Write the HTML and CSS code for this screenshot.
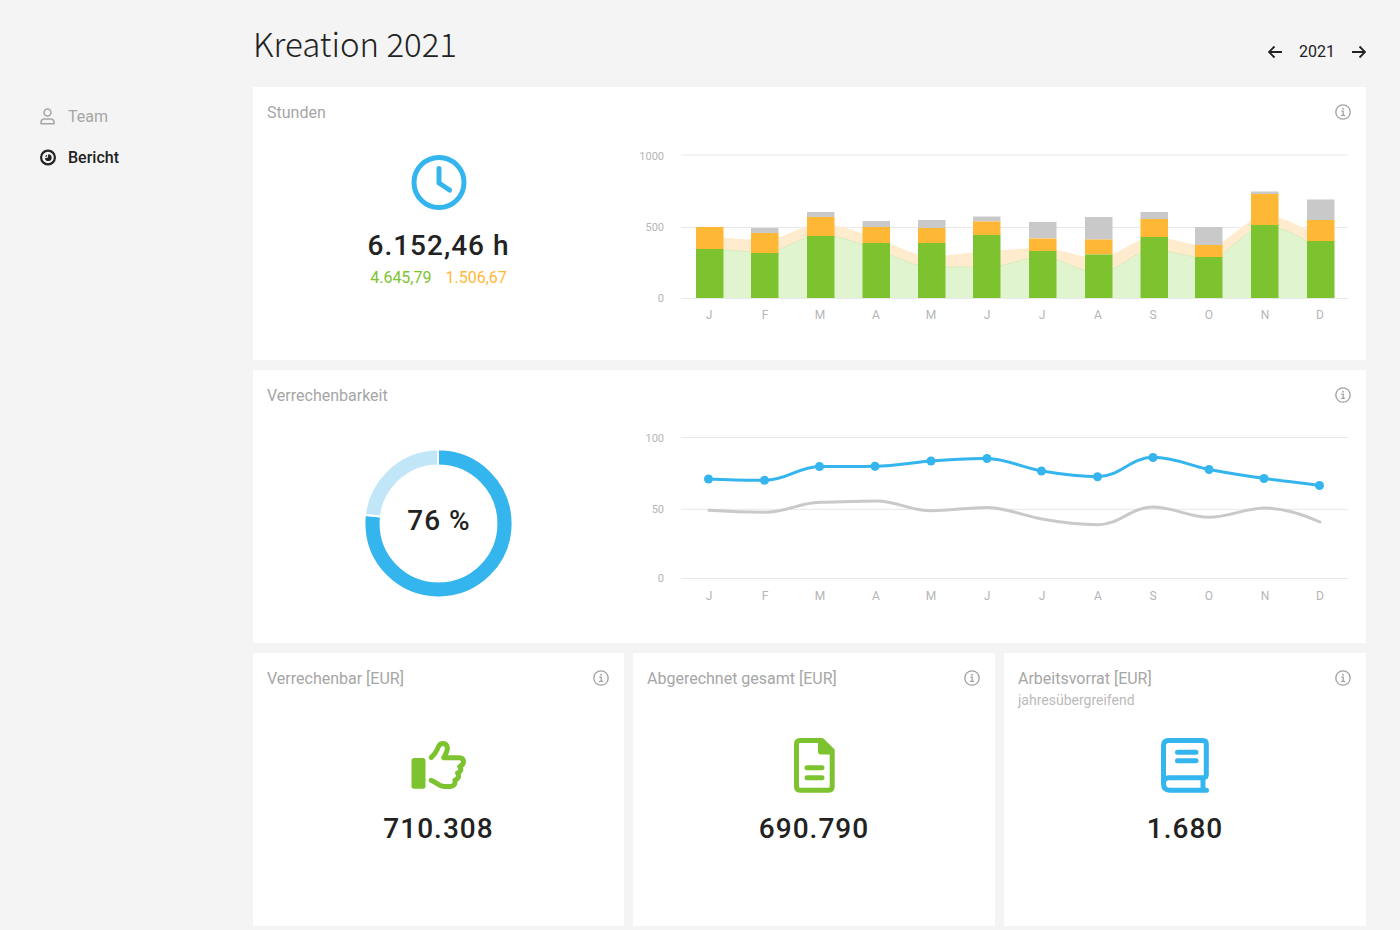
FILE: index.html
```html
<!DOCTYPE html>
<html lang="de">
<head>
<meta charset="utf-8">
<meta name="viewport" content="width=device-width, initial-scale=1">
<title>Kreation 2021</title>
<link rel="stylesheet" href="styles.css">
</head>
<body>
<svg class="defs" aria-hidden="true">
  <symbol id="info" viewBox="0 0 16 16">
    <circle cx="8" cy="8" r="7.2" fill="none" stroke="currentColor" stroke-width="1.3"/>
    <path d="M6.3 7.2H8.2V11.2M6.1 11.4H10" fill="none" stroke="currentColor" stroke-width="1.2"/>
    <circle cx="8" cy="4.7" r="0.9" fill="currentColor"/>
  </symbol>
</svg>
<div class="layout">
  <nav class="sidebar" aria-label="Bereiche">
    <a class="nav-link" href="#team">
      <svg class="nav-icon" viewBox="0 0 16 18" fill="none" stroke="currentColor" stroke-width="1.5"><circle cx="7.500" cy="4.500" r="3.500"/><path d="M4 11H11C13.500 11.300 14.200 13.500 14 15.700H1C0.800 13.500 1.500 11.300 4 11Z" stroke-linejoin="round"/></svg>
      Team
    </a>
    <a class="nav-link nav-link-active" href="#bericht" aria-current="page">
      <svg class="nav-icon" viewBox="0 0 16 18"><circle cx="8" cy="8.500" r="6.900" fill="none" stroke="currentColor" stroke-width="2.200"/><path d="M8.200 5.300A3.400 3.400 0 1 1 4.900 9.300L8 8.600Z" fill="currentColor"/><path d="M5 7.800A3.400 3.400 0 0 1 7 5.700L7.200 7.400Z" fill="currentColor"/></svg>
      Bericht
    </a>
  </nav>
  <main class="main">
    <header class="topbar">
      <h1 class="page-title">Kreation 2021</h1>
      <div class="year-picker">
        <button class="arrow" type="button" aria-label="Vorheriges Jahr"><svg viewBox="0 0 14 14"><path d="M14 7H1M6.5 1.5L1 7L6.5 12.5"/></svg></button>
        <span>2021</span>
        <button class="arrow" type="button" aria-label="Nächstes Jahr"><svg viewBox="0 0 14 14"><path d="M0 7H13M7.5 1.5L13 7L7.5 12.5"/></svg></button>
      </div>
    </header>

    <div class="cards">
      <section class="card card-wide">
        <header class="card-head">
          <h2 class="card-title">Stunden</h2>
          <button class="info" type="button" aria-label="Info zu Stunden"><svg><use href="#info"/></svg></button>
        </header>
        <div class="split">
          <div class="metric">
            <svg class="icon blue" viewBox="0 0 56 56"><circle cx="28" cy="27.5" r="25"/><path d="M28 13.5V28L38.5 35"/></svg>
            <strong class="value">6.152,46 h</strong>
            <div class="parts"><span class="part-green">4.645,79</span><span class="part-orange">1.506,67</span></div>
          </div>
          <svg class="chart" viewBox="0 0 719 190" role="img" aria-label="Stunden pro Monat">
            <path class="grid-line" d="M48 15H715M48 87.5H715M48 158.5H715"/>
            <path class="area-orange" d="M76 96C94 98 114 100 132 100S169 84 187 84S225 92 243 98S280 116 298 116S335 112 354 111S391 108 409 108S447 118 465 118S502 97 520 97S557 106 576 106S613 76 632 76S669 88 687 96V158H76Z"/>
            <path class="area-green" d="M76 109C94 110 114 112 132 112S169 95 187 95S225 103 243 109S280 127 298 127S335 127 354 127S391 117 409 117S447 133 465 133S502 110 520 110S557 118 576 118S613 86 632 86S669 99 687 108V158H76Z"/>
            <path class="area-edge" d="M76 109C94 110 114 112 132 112S169 95 187 95S225 103 243 109S280 127 298 127S335 127 354 127S391 117 409 117S447 133 465 133S502 110 520 110S557 118 576 118S613 86 632 86S669 99 687 108"/>
            <path class="bar-gray" d="M118 88H145.500V93H118ZM174 72H201.500V77H174ZM229.500 81H257V87H229.500ZM285 80H312.500V88H285ZM340 76.500H367.500V81.500H340ZM396 82H423.500V98.500H396ZM452 77H479.500V99.500H452ZM507.500 72H535V79H507.500ZM562 87H589.500V105H562ZM618 51.500H645.500V54H618ZM674 59.500H701.500V80H674Z"/>
            <path class="bar-orange" d="M63 87H90.500V109H63ZM118 93H145.500V113H118ZM174 77H201.500V96H174ZM229.500 87H257V103H229.500ZM285 88H312.500V103H285ZM340 81.500H367.500V95H340ZM396 98.500H423.500V111H396ZM452 99.500H479.500V114.500H452ZM507.500 79H535V97H507.500ZM562 105H589.500V117H562ZM618 54H645.500V85H618ZM674 80H701.500V101H674Z"/>
            <path class="bar-green" d="M63 109H90.500V158H63ZM118 113H145.500V158H118ZM174 96H201.500V158H174ZM229.500 103H257V158H229.500ZM285 103H312.500V158H285ZM340 95H367.500V158H340ZM396 111H423.500V158H396ZM452 114.500H479.500V158H452ZM507.500 97H535V158H507.500ZM562 117H589.500V158H562ZM618 85H645.500V158H618ZM674 101H701.500V158H674Z"/>
            <g class="ticks"><text x="31" y="20">1000</text><text x="31" y="91">500</text><text x="31" y="162">0</text></g>
            <g class="months"><text x="76" y="179">J</text><text x="132" y="179">F</text><text x="187" y="179">M</text><text x="243" y="179">A</text><text x="298" y="179">M</text><text x="354" y="179">J</text><text x="409" y="179">J</text><text x="465" y="179">A</text><text x="520" y="179">S</text><text x="576" y="179">O</text><text x="632" y="179">N</text><text x="687" y="179">D</text></g>
          </svg>
        </div>
      </section>

      <section class="card card-wide">
        <header class="card-head">
          <h2 class="card-title">Verrechenbarkeit</h2>
          <button class="info" type="button" aria-label="Info zu Verrechenbarkeit"><svg><use href="#info"/></svg></button>
        </header>
        <div class="split">
          <div class="metric metric-donut">
            <svg class="donut" viewBox="0 0 148 148" role="img" aria-label="76 %">
              <circle class="donut-rest" cx="73.5" cy="73.5" r="66"/>
              <circle class="donut-value" cx="73.5" cy="73.5" r="66" pathLength="360" stroke-dasharray="276 84" transform="rotate(-90 73.5 73.5)"/>
              <path class="donut-gap" d="M73 0V16M0 65L16 66.500"/>
              <text class="donut-text" x="74" y="80">76 %</text>
            </svg>
          </div>
          <svg class="chart" viewBox="0 1 719 189" role="img" aria-label="Verrechenbarkeit pro Monat">
            <path class="grid-line" d="M48 15.500H715M48 87.300H715M48 156.500H715"/>
            <path class="line-gray" d="M76 88.300C94 89.500 114 90.300 132 90.300C154 90.300 165 80.800 187 80.300S225 79 243 79C265 79 276 88.700 298 88.700C317 88.700 335 85.500 354 85.500C373 85.500 391 94 409 97C428 100.500 447 102.700 465 102.700C487 102.700 498 85 520 85C540 85 556 95.300 576 95.300C596 95.300 612 86 632 86C650 86 669 92 687 100"/>
            <path class="line-blue" d="M76 57C94 57.500 114 58.300 132 58.300C154 58.300 165 44.700 187 44.500S225 44.500 243 44.300S280 40.500 298 39S335 36.300 354 36.500S391 46 409 49S447 54.700 465 54.700C487 54.700 498 35.300 520 35.300S557 44 576 47.500S613 54 632 56.500S669 61 687 63.500"/>
            <g class="dots"><circle cx="75.500" cy="57" r="4.500"/><circle cx="131.500" cy="58.300" r="4.500"/><circle cx="186.500" cy="44.500" r="4.500"/><circle cx="242" cy="44.300" r="4.500"/><circle cx="298" cy="39" r="4.500"/><circle cx="354" cy="36.500" r="4.500"/><circle cx="408.500" cy="49" r="4.500"/><circle cx="464.500" cy="54.700" r="4.500"/><circle cx="520" cy="35.500" r="4.500"/><circle cx="576" cy="47.500" r="4.500"/><circle cx="631" cy="56.500" r="4.500"/><circle cx="686.500" cy="63.500" r="4.500"/></g>
            <g class="ticks"><text x="31" y="20">100</text><text x="31" y="91">50</text><text x="31" y="160">0</text></g>
            <g class="months"><text x="76" y="178">J</text><text x="132" y="178">F</text><text x="187" y="178">M</text><text x="243" y="178">A</text><text x="298" y="178">M</text><text x="354" y="178">J</text><text x="409" y="178">J</text><text x="465" y="178">A</text><text x="520" y="178">S</text><text x="576" y="178">O</text><text x="632" y="178">N</text><text x="687" y="178">D</text></g>
          </svg>
        </div>
      </section>

      <section class="card card-small">
        <header class="card-head">
          <h2 class="card-title">Verrechenbar [EUR]</h2>
          <button class="info" type="button" aria-label="Info zu Verrechenbar"><svg><use href="#info"/></svg></button>
        </header>
        <div class="metric">
          <svg class="icon green" viewBox="0 0 56 56"><rect class="solid" x="0.5" y="20" width="14" height="30.700" rx="2.500"/><path d="M20.200 19.500C25.500 15 25.500 12.500 27.500 8.500C29.500 4.300 35.500 4.500 36.300 9.500C36.800 13 34.500 16.500 32.800 19.700H48C53.500 19.900 54 26 48.800 28.500C51 31.500 49.500 34 46.500 35C49 38.500 47 41 44 42C44.500 46 43 48.400 39.500 48.500H33C27 48.200 25.500 44 20.200 42.300"/></svg>
          <strong class="value">710.308</strong>
        </div>
      </section>

      <section class="card card-small">
        <header class="card-head">
          <h2 class="card-title">Abgerechnet gesamt [EUR]</h2>
          <button class="info" type="button" aria-label="Info zu Abgerechnet gesamt"><svg><use href="#info"/></svg></button>
        </header>
        <div class="metric">
          <svg class="icon green" viewBox="0 0 56 56"><path d="M14 2.500H36L46.200 12.500V48.500Q46.200 52.200 42.500 52.200H14Q10.500 52.200 10.500 48.500V6Q10.500 2.500 14 2.500ZM21 29.700H36M21 39.700H36"/><path class="solid" d="M32 3H37L47 13V16.400H34.500Q32 16.400 32 14Z"/></svg>
          <strong class="value">690.790</strong>
        </div>
      </section>

      <section class="card card-small">
        <header class="card-head">
          <div>
            <h2 class="card-title">Arbeitsvorrat [EUR]</h2>
            <p class="card-sub">jahresübergreifend</p>
          </div>
          <button class="info" type="button" aria-label="Info zu Arbeitsvorrat"><svg><use href="#info"/></svg></button>
        </header>
        <div class="metric">
          <svg class="icon blue" viewBox="0 0 56 56"><path d="M6.500 46V7.500Q6.500 2.500 11.500 2.500H46Q49.300 2.500 49.300 6V37Q49.300 39.700 46 39.700H12Q6.500 39.700 6.500 45.500Q6.500 52.200 12.500 52.200H49.500M46 40V51M20.500 14.300H39M20.500 22.700H39"/></svg>
          <strong class="value">1.680</strong>
        </div>
      </section>
    </div>
  </main>
</div>
</body>
</html>
```

FILE: styles.css
```css
:root {
  --blue: #35b5ed;
  --green: #7dc32f;
  --orange: #ffb836;
  --gray: #c9c9c9;
  --ink: #222;
  --muted: #a6a6a6;
}

* {
  box-sizing: border-box;
}

body {
  margin: 0;
  background: #f4f4f4;
  color: var(--ink);
  font: 16px/24px Roboto, "Liberation Sans", sans-serif;
}

button {
  padding: 0;
  border: 0;
  background: none;
  color: inherit;
  font: inherit;
  cursor: pointer;
}

svg {
  display: block;
}

.defs {
  display: none;
}

.layout {
  display: grid;
  grid-template-columns: 253px minmax(0, 1fr);
}

.sidebar {
  padding: 96px 16px 0 40px;
}

.nav-link {
  display: flex;
  align-items: center;
  gap: 12px;
  height: 41px;
  color: var(--muted);
  text-decoration: none;
}

.nav-link-active {
  color: var(--ink);
  font-weight: 500;
}

.nav-icon {
  width: 16px;
  height: 18px;
}

.main {
  padding: 0 34px 4px 0;
}

.topbar {
  display: flex;
  align-items: center;
  justify-content: space-between;
  height: 87px;
  padding-top: 16px;
}

.page-title {
  margin: 0;
  padding-bottom: 18px;
  font: 300 33px/44px "Noto Sans CJK SC", "Open Sans", sans-serif;
}

.year-picker {
  display: flex;
  align-items: center;
  gap: 17px;
}

.arrow svg {
  width: 14px;
  height: 14px;
  fill: none;
  stroke: currentColor;
  stroke-width: 1.8;
}

.cards {
  display: grid;
  grid-template-columns: 371fr 362fr 362fr;
  gap: 10px 9px;
}

.card {
  min-height: 273px;
  background: #fff;
}

.card-wide {
  grid-column: 1 / -1;
}

.card-head {
  display: flex;
  align-items: flex-start;
  justify-content: space-between;
  min-height: 53px;
  padding: 14px 15px 0 14px;
}

.card-title {
  margin: 0;
  color: var(--muted);
  font-size: 16px;
  font-weight: 400;
}

.card-sub {
  margin: 0;
  color: #bbb;
  font-size: 14px;
  line-height: 18px;
}

.info {
  color: #a0a0a0;
}

.info svg {
  width: 16px;
  height: 22px;
}

.split {
  display: grid;
  grid-template-columns: 1fr 2fr;
}

.metric {
  display: flex;
  flex-direction: column;
  align-items: center;
  padding-top: 15px;
}

.metric-donut {
  padding-top: 27px;
}

.card-small .card-head {
  min-height: 56px;
}

.card-small .metric {
  padding-top: 29px;
}

.icon {
  width: 56px;
  height: 56px;
  fill: none;
  stroke: currentColor;
  stroke-width: 5;
  stroke-linecap: round;
  stroke-linejoin: round;
}

.icon .solid {
  fill: currentColor;
  stroke: none;
}

.blue {
  color: var(--blue);
}

.green {
  color: var(--green);
}

.value {
  margin-top: 19px;
  font-size: 28px;
  font-weight: 500;
  line-height: 32px;
  letter-spacing: 1px;
}

.parts {
  display: flex;
  gap: 14px;
  margin-top: 6px;
  line-height: 20px;
}

.part-green {
  color: var(--green);
}

.part-orange {
  color: var(--orange);
}

.chart {
  width: 100%;
  padding: 0 14px 0 9px;
}

.grid-line {
  fill: none;
  stroke: #e8e8e8;
}

.area-orange {
  fill: #ffecce;
}

.area-green {
  fill: #e0f4cf;
}

.area-edge {
  fill: none;
  stroke: #c4e8a6;
  stroke-dasharray: 1 1;
}

.bar-gray {
  fill: var(--gray);
}

.bar-orange {
  fill: var(--orange);
}

.bar-green {
  fill: var(--green);
}

.ticks {
  fill: #b5b5b5;
  font-size: 11px;
  text-anchor: end;
}

.months {
  fill: #b5b5b5;
  font-size: 12px;
  text-anchor: middle;
}

.line-gray,
.line-blue {
  fill: none;
  stroke: var(--gray);
  stroke-width: 3;
  stroke-linecap: round;
}

.line-blue {
  stroke: var(--blue);
}

.dots {
  fill: var(--blue);
}

.donut {
  width: 148px;
  height: 148px;
}

.donut-rest,
.donut-value {
  fill: none;
  stroke: #c0e6f8;
  stroke-width: 14;
}

.donut-value {
  stroke: var(--blue);
}

.donut-gap {
  stroke: #fff;
  stroke-width: 2;
}

.donut-text {
  fill: var(--ink);
  font-size: 28px;
  font-weight: 500;
  letter-spacing: 1px;
  text-anchor: middle;
}
```
